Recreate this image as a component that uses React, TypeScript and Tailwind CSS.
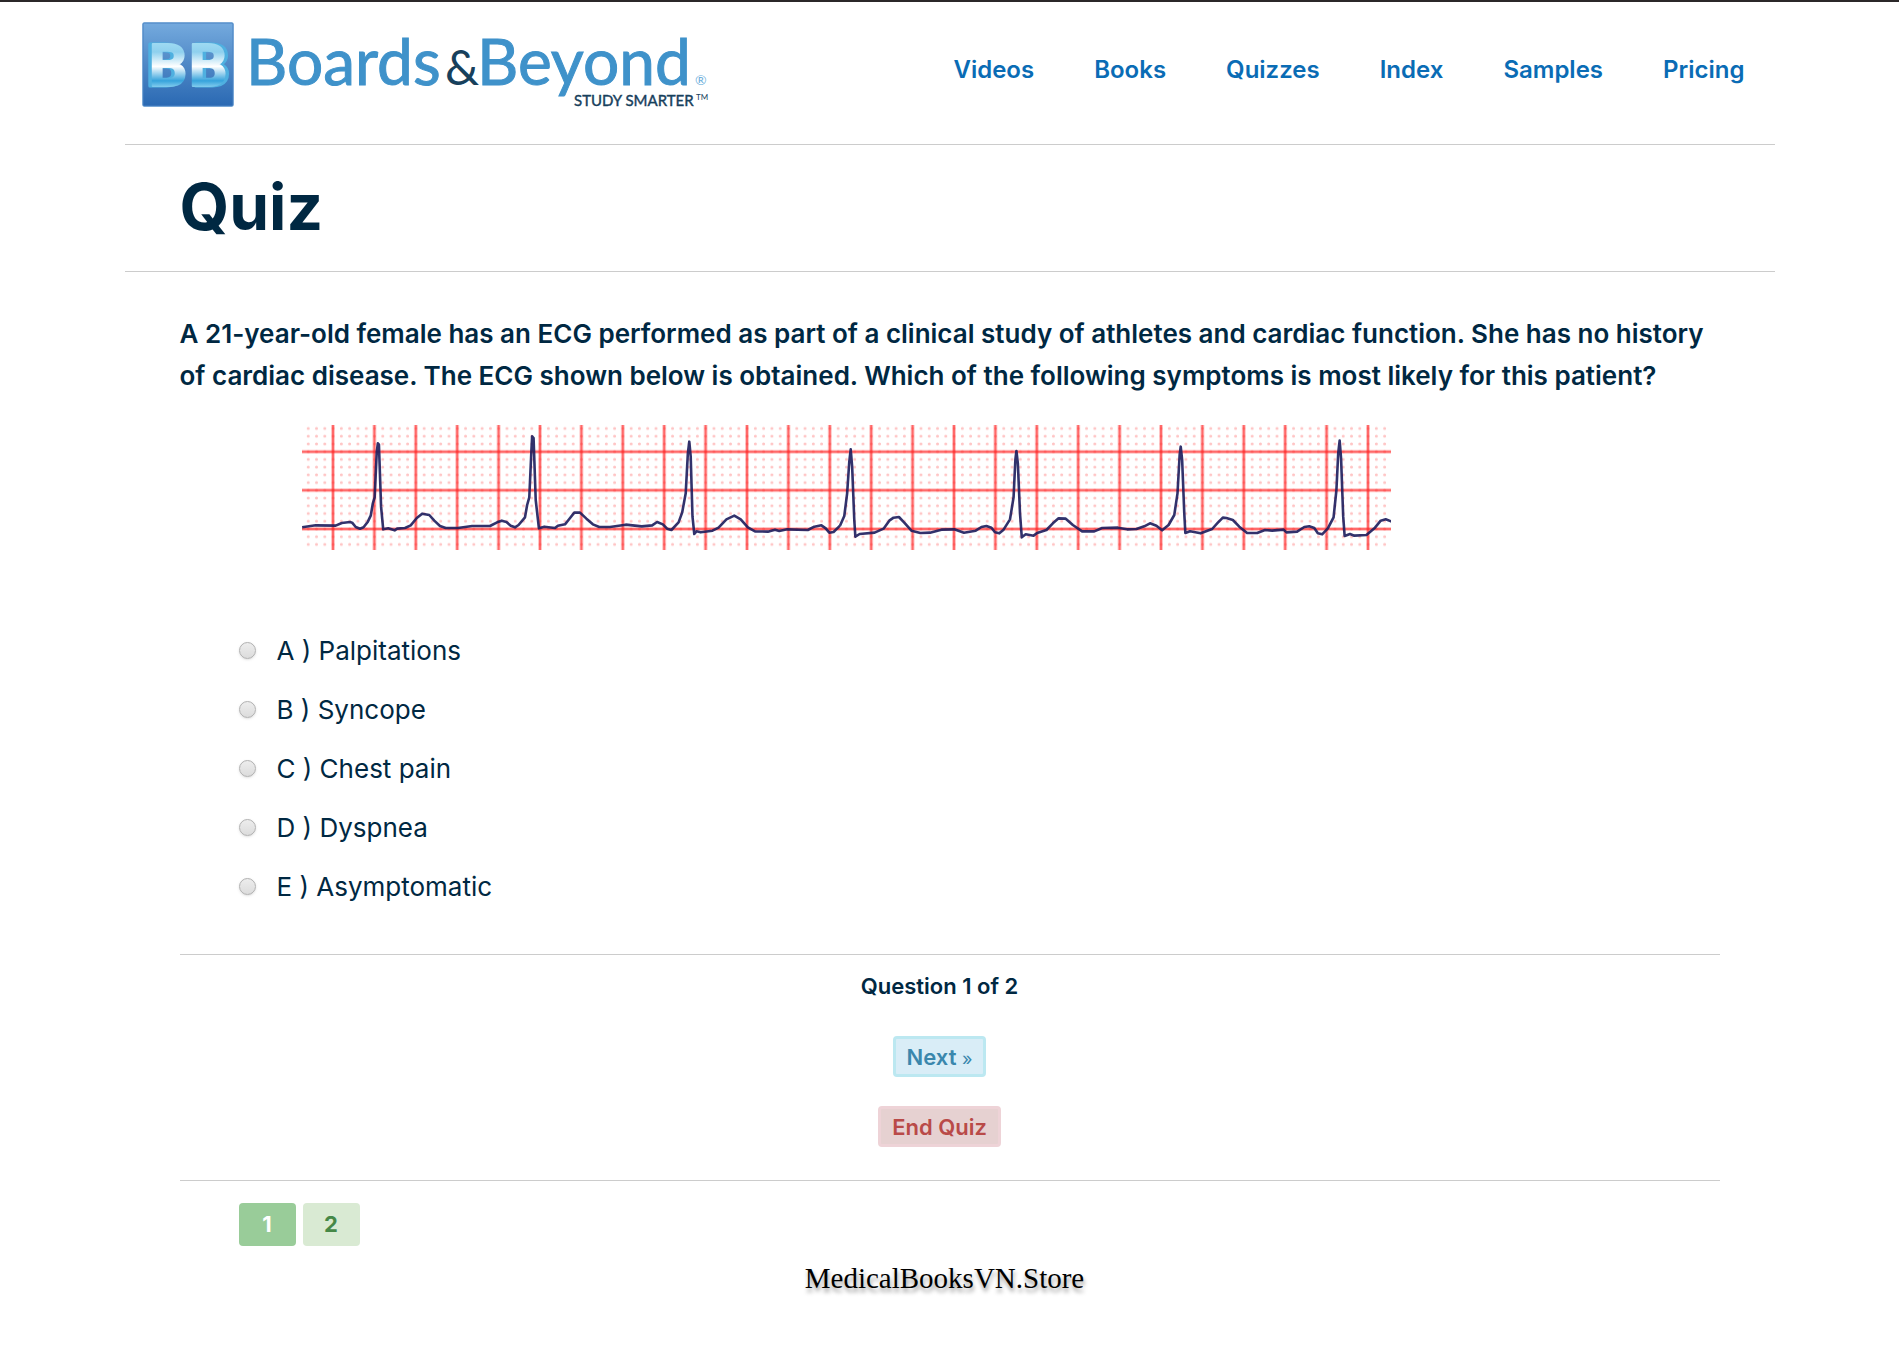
const navLinks = ["Videos", "Books", "Quizzes", "Index", "Samples", "Pricing"];

const answers = [
  ["A", "Palpitations"],
  ["B", "Syncope"],
  ["C", "Chest pain"],
  ["D", "Dyspnea"],
  ["E", "Asymptomatic"],
];

function Logo() {
  return (
    <svg width="570" height="92" viewBox="0 0 570 92" role="img" aria-label="Boards & Beyond, Study Smarter">
      <defs>
        <linearGradient id="tile" x1="0" y1="0" x2="0" y2="1">
          <stop offset="0" stopColor="#74aade" />
          <stop offset="0.5" stopColor="#4f88c6" />
          <stop offset="1" stopColor="#2a69b3" />
        </linearGradient>
        <linearGradient id="face" gradientUnits="userSpaceOnUse" x1="0" y1="20" x2="0" y2="68">
          <stop offset="0" stopColor="#a4ddf3" />
          <stop offset="0.25" stopColor="#8ed0ee" />
          <stop offset="0.55" stopColor="#ffffff" />
          <stop offset="0.85" stopColor="#36a3dc" />
          <stop offset="1" stopColor="#8fd3f0" />
        </linearGradient>
      </defs>
      <rect x="1" y="2" width="92" height="85" rx="3" fill="#a9cdea" />
      <rect x="2" y="3" width="90" height="83" rx="1" fill="url(#tile)" stroke="#4a82c2" />
      <g fontFamily="Roboto, sans-serif" fontWeight="700" fontSize="60" strokeLinejoin="round">
        <g fill="#4fb0e0" stroke="#4fb0e0" strokeWidth="3">
          <text x="5" y="66">B</text>
          <text x="51" y="66">B</text>
        </g>
        <g fill="url(#face)" stroke="url(#face)" strokeWidth="2">
          <text x="8" y="66">B</text>
          <text x="48" y="66">B</text>
        </g>
      </g>
      <g fontFamily="Lato, sans-serif">
        <g fill="#3f92ca" stroke="#3f92ca" strokeWidth="1" fontSize="64">
          <text x="105" y="65">Boards</text>
          <text x="336" y="65">Beyond</text>
        </g>
        <text x="304" y="65" fontSize="48" fill="#17405c">&amp;</text>
        <text x="554" y="65" fontSize="14" fill="#6fb0dc">®</text>
        <text x="433" y="86" fontSize="15" fill="#17405c" stroke="#17405c" strokeWidth="0.4">STUDY SMARTER</text>
        <text x="555" y="80" fontSize="8" fill="#17405c">TM</text>
      </g>
    </svg>
  );
}

const beatsLeft =
  "34,352 72,346 128,347 145,339 168,336 174,338 184,351 196,356 206,352 218,335 226,317 232,280 237,262 243,125 246,100 249,104 255,290 261,358 275,355 293,361 300,356 322,354 338,346 355,324 370,311 390,315 404,332 420,348 436,354 470,354 510,348 560,348 580,337 593,332 606,336 618,347 630,352 640,345 658,322 664,285 670,262 676,120 678,79 682,84 688,270 697,355 712,350 742,354 750,347 770,343 782,327 796,308 812,308 830,326 848,343 866,351 896,351 940,344 985,349 1014,346 1028,336 1044,343 1056,356 1068,360 1088,337 1098,308 1108,250 1114,130 1118,95 1122,140 1127,320 1132,372 1138,364 1150,367 1183,362 1200,353 1222,328 1244,317 1262,328 1282,352 1302,364 1338,365 1358,359 1370,363 1392,358 1450,360 1468,350 1488,346 1500,355 1510,368 1522,366 1540,347";
const beatsRight =
  "0,347 12,318 20,250 26,155 30,118 34,170 40,330 43,380 55,372 97,368 122,356 138,332 150,323 165,321 180,338 200,362 225,369 252,368 284,359 320,358 347,368 380,362 396,351 410,348 424,353 434,367 446,370 458,359 476,328 486,262 491,150 494,123 498,160 504,310 509,382 520,373 542,377 552,369 578,360 596,340 612,325 632,326 652,345 678,364 712,364 734,354 778,353 804,358 830,357 852,349 868,340 886,347 902,361 920,345 936,315 945,250 951,135 954,110 958,150 964,310 967,369 980,364 1010,370 1042,357 1058,338 1072,323 1082,324 1100,330 1118,350 1140,369 1168,369 1190,360 1210,362 1242,359 1250,367 1280,365 1300,351 1314,349 1328,354 1338,370 1350,373 1366,355 1382,322 1390,240 1395,130 1399,92 1403,145 1409,320 1413,378 1428,372 1440,377 1474,375 1498,353 1514,332 1528,328 1543,334 1550,338";

function EcgStrip() {
  return (
    <svg
      className="h-auto w-[1089px] max-w-full"
      viewBox="0 0 1089 125"
      role="img"
      aria-label="ECG rhythm strip"
    >
      <defs>
        <pattern id="dots" x="2.1" y="-0.4" width="8.28" height="7.73" patternUnits="userSpaceOnUse">
          <circle cx="4.14" cy="3.86" r="1.5" fill="#ffc4c4" />
        </pattern>
      </defs>
      <rect width="1089" height="125" fill="url(#dots)" />
      <g stroke="#ff1a1a" strokeOpacity="0.25" strokeWidth="4">
        {Array.from({ length: 26 }, (_, i) => (
          <path key={i} d={`M${31 + 41.4 * i} 0V125`} />
        ))}
        <path d="M0 26.7H1089M0 65.3H1089M0 104H1089" />
      </g>
      <g stroke="#ff2d2d" strokeOpacity="0.6" strokeWidth="2">
        {Array.from({ length: 26 }, (_, i) => (
          <path key={i} d={`M${31 + 41.4 * i} 0V125`} />
        ))}
        <path d="M0 26.7H1089M0 65.3H1089M0 104H1089" />
      </g>
      <g fill="none" stroke="#1c1c5c" strokeOpacity="0.9" strokeWidth="2.6" strokeLinejoin="round">
        <polyline vectorEffect="non-scaling-stroke" transform="matrix(0.35714 0 0 0.33333 -12 -15)" points={beatsLeft} />
        <polyline vectorEffect="non-scaling-stroke" transform="matrix(0.35714 0 0 0.33333 538 -15)" points={beatsRight} />
      </g>
    </svg>
  );
}

export default function App() {
  return (
    <div className="min-h-screen border-t-2 border-[#2b2829] bg-white font-['Inter',sans-serif] text-[#002842]">
      <div className="mx-auto max-w-[1650px]">
        <header className="flex items-start justify-between border-b border-[#cccccc] pt-[18px] pr-[30px] pb-8 pl-4">
          <a href="#home">
            <Logo />
          </a>
          <nav className="flex gap-[60px] pt-[34px] text-2xl font-semibold text-[#0a6cb5]">
            {navLinks.map((name) => (
              <a key={name} href={`#${name.toLowerCase()}`}>
                {name}
              </a>
            ))}
          </nav>
        </header>

        <div className="border-b border-[#cccccc] px-[55px] pt-[26px] pb-7">
          <h1 className="text-[64px] leading-[72px] font-bold">Quiz</h1>
        </div>

        <main className="px-[55px] pt-[41px]">
          <form onSubmit={(e) => e.preventDefault()}>
            <p className="text-[26px] leading-[42px] font-semibold">
              A 21-year-old female has an ECG performed as part of a clinical study of athletes and cardiac function. She
              has no history of cardiac disease. The ECG shown below is obtained. Which of the following symptoms is most
              likely for this patient?
            </p>
            <div className="pt-7 pl-[122px]">
              <EcgStrip />
            </div>

            <fieldset aria-label="Answers" className="mt-[71px] pl-[59px]">
              {answers.map(([letter, text]) => (
                <label key={letter} className="flex h-[59px] items-center gap-[21px] text-[26px]">
                  <input
                    type="radio"
                    name="answer"
                    value={letter}
                    className="size-[17px] appearance-none rounded-full border border-[#b0b0b0] bg-linear-to-b from-[#ededed] to-[#dcdcdc] shadow-sm checked:bg-[#3a87ad]"
                  />
                  <span>
                    {letter} ) {text}
                  </span>
                </label>
              ))}
            </fieldset>

            <div className="mt-[38px] flex flex-col items-center border-y border-[#cccccc] pt-[15px] pr-5 pb-[33px] text-[22px] leading-8 font-semibold">
              <p>Question 1 of 2</p>
              <button
                type="button"
                className="mt-[34px] h-[41px] rounded border-3 border-[#bce8f1] bg-[#d9edf7] px-[11px] text-[#3a87ad]"
              >
                Next <span className="text-lg font-normal">»</span>
              </button>
              <button
                type="button"
                className="mt-[29px] h-[41px] rounded border-3 border-[#eed3d7] bg-[#e6d1d1] px-[11px] text-[#b94a48]"
              >
                End Quiz
              </button>
            </div>

            <div className="mt-[22px] flex gap-[7px] pl-[59px] text-[22px] font-bold">
              <button type="button" className="h-[43px] w-[57px] rounded bg-[#99cc99] text-white">
                1
              </button>
              <button type="button" className="h-[43px] w-[57px] rounded bg-[#d9ead3] text-[#468847]">
                2
              </button>
            </div>
          </form>
        </main>

        <footer className="pt-3 pr-[10px] text-center font-['Palatino_Linotype','Liberation_Serif',serif] text-[29px] leading-10 text-black [text-shadow:1px_4px_4px_rgba(0,0,0,0.4)]">
          MedicalBooksVN.Store
        </footer>
      </div>
    </div>
  );
}
